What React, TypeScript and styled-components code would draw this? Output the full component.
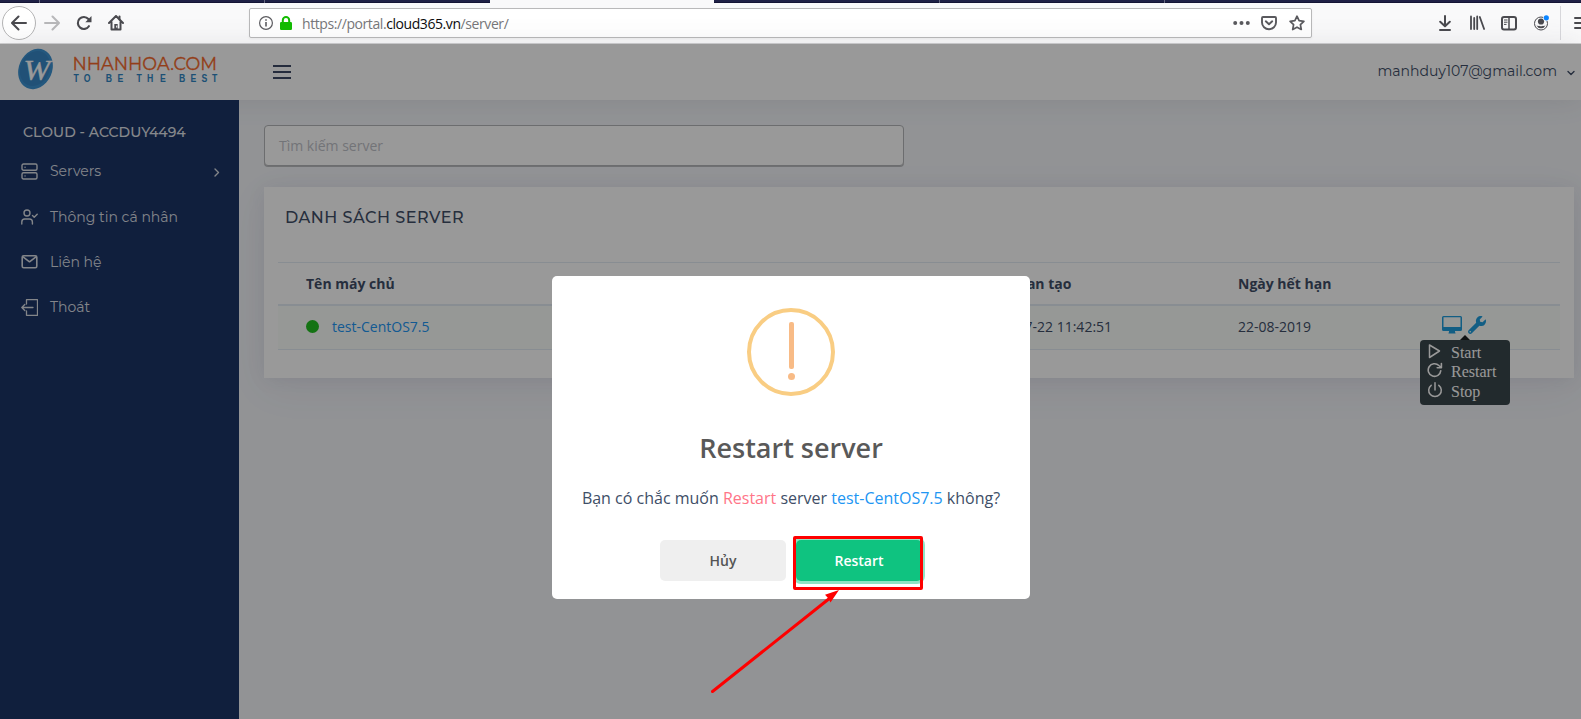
import React from "react";
import styled, { createGlobalStyle } from "styled-components";
import { FaWrench } from "react-icons/fa";

const sans = `"Open Sans", "Noto Sans", sans-serif`;
const display = `Montserrat, Inter, "Open Sans", sans-serif`;

const GlobalStyle = createGlobalStyle`
  *, *::before, *::after { box-sizing: border-box; }
  html, body { margin: 0; padding: 0; overflow: hidden; }
  body { font-family: ${sans}; font-size: 14px; }
  svg { display: block; flex: none; }
`;

const Screen = styled.div`
  width: 1581px;
  height: 719px;
  display: flex;
  flex-direction: column;
  position: relative;
  overflow: hidden;
`;

/* ---------- browser chrome ---------- */

const TabStrip = styled.div`
  display: flex;
  height: 3px;
  flex: none;
  background: #1e2042;
`;

const Tab = styled.div<{ $w: number; $active?: boolean; $line?: boolean }>`
  width: ${(p) => p.$w}px;
  background: ${(p) => (p.$active ? "#f9f9fa" : "linear-gradient(#1f2146 60%, #0c0c28)")};
  border-right: ${(p) => (p.$line ? "1px solid #66677f" : "none")};
`;

const Toolbar = styled.div`
  display: flex;
  align-items: center;
  flex: none;
  height: 41px;
  padding-left: 2px;
  background: #f9f9fa;
  border-bottom: 1px solid #cfcfd0;
  overflow: hidden;
`;

const BackButton = styled.div`
  display: flex;
  align-items: center;
  justify-content: center;
  flex: none;
  width: 34px;
  height: 34px;
  border: 1px solid #b4b4b5;
  border-radius: 50%;
  background: #fff;
`;

const ToolIcon = styled.div<{ $gap: number }>`
  flex: none;
  margin-left: ${(p) => p.$gap}px;
`;

const UrlBar = styled.div`
  display: flex;
  align-items: center;
  flex: none;
  width: 1063px;
  height: 30px;
  margin-left: 125px;
  padding: 0 6px 0 0;
  background: #fff;
  border: 1px solid #b9b9ba;
  border-radius: 2px;
  box-shadow: 0 1px 3px rgba(0, 0, 0, 0.05);
`;

const Url = styled.div`
  flex: 1;
  margin-left: 10px;
  padding-top: 2px;
  font: 14px/20px ${sans};
  letter-spacing: -0.42px;
  color: #77777a;
  b { font-weight: 400; color: #0c0c0d; }
`;

const Divider = styled.div`
  flex: none;
  width: 1px;
  height: 34px;
  margin-left: 11px;
  background: #d7d7db;
`;

/* ---------- page ---------- */

const Page = styled.div`
  flex: 1;
  display: flex;
  flex-direction: column;
  position: relative;
  background: #f3f5f9;
`;

const Header = styled.header`
  display: flex;
  align-items: center;
  height: 56px;
  flex: none;
  background: #fff;
  box-shadow: 0 0 28px rgba(82, 85, 92, 0.12);
  z-index: 1;
`;

const Burger = styled.div`
  display: flex;
  flex-direction: column;
  gap: 4px;
  width: 18px;
  margin-left: 45px;
  padding-bottom: 1px;
  span { height: 2px; background: #3e4a66; }
`;

const User = styled.div`
  display: flex;
  align-items: center;
  gap: 10px;
  margin-left: auto;
  padding: 0 6px 2px 0;
  font: 14px/20px ${display};
  color: #404e67;
  svg { margin-top: 4px; }
`;

const Body = styled.div`
  flex: 1;
  display: flex;
`;

const Sidebar = styled.nav`
  flex: none;
  width: 239px;
  padding: 21px 21px 0;
  background: #1c3566;
  color: #fff;
  font-family: ${display};
  z-index: 2;
`;

const Account = styled.div`
  padding-left: 2px;
  font-size: 14px;
  font-weight: 500;
  line-height: 22px;
  letter-spacing: 0.05px;
  margin-bottom: 6px;
  color: #e0e3e9;
`;

const NavItem = styled.div`
  display: flex;
  align-items: center;
  height: 45.2px;
  gap: 12px;
  color: #dadee5;
  font-size: 14px;
  span { margin-top: -0.5px; }
  svg:last-child:not(:first-child) { margin: 1px -2px 0 auto; }
`;

const Content = styled.main`
  flex: 1;
  padding: 25px 7px 0 25px;
`;

const Search = styled.div`
  width: 640px;
  height: 41px;
  padding: 0 14px;
  font-size: 14px;
  line-height: 40px;
  color: #bfc2c9;
  background: #fff;
  border: 1px solid #b5b6b9;
  border-radius: 4px;
  box-shadow: 0 1px 0 #bbbcbf;
`;

const Card = styled.section`
  height: 191px;
  margin-top: 21px;
  padding: 17px 14px 0;
  background: #fff;
  box-shadow: 0 10px 40px rgba(62, 57, 107, 0.06), 0 2px 18px rgba(62, 57, 107, 0.07);
`;

const CardTitle = styled.h4`
  margin: 0 0 31px;
  padding: 0 7px;
  height: 27px;
  font: 500 16px/27px ${display};
  letter-spacing: 0.5px;
  color: #404e67;
`;

const Row = styled.div<{ $head?: boolean }>`
  display: grid;
  grid-template-columns: 674px 258px 204px 1fr;
  align-items: center;
  height: 44px;
  padding-left: 28px;
  padding-bottom: ${(p) => (p.$head ? 0 : 2)}px;
  line-height: 21px;
  color: #404e67;
  font-weight: ${(p) => (p.$head ? 700 : 400)};
  background: ${(p) => (p.$head ? "none" : "#fafdfb")};
  border-top: ${(p) => (p.$head ? "1px solid #e3ebf3" : "none")};
  border-bottom: ${(p) => (p.$head ? "2px" : "1px")} solid #e3ebf3;
`;

const ServerName = styled.div`
  display: flex;
  align-items: center;
  gap: 13px;
  color: #2196f3;
`;

const Status = styled.span`
  width: 13px;
  height: 13px;
  border-radius: 50%;
  background: #22c021;
`;

const Actions = styled.div`
  display: flex;
  position: relative;
  gap: 6px;
  color: #1f9ddd;
  margin-top: -3px;
`;

const Tooltip = styled.div`
  position: absolute;
  top: 24px;
  left: -22px;
  width: 90px;
  height: 65px;
  padding: 3px 0 0 7px;
  border-radius: 4px;
  background: #3a464b;
  color: #fff;
  font: 16px/19.4px "Liberation Serif", serif;
  &::before {
    content: "";
    position: absolute;
    top: -5px;
    left: 40px;
    border: 5px solid transparent;
    border-top: 0;
    border-bottom-color: #1a1e20;
  }
`;

const TooltipItem = styled.div`
  display: flex;
  gap: 8px;
`;

/* ---------- dialog ---------- */

const Overlay = styled.div`
  position: absolute;
  inset: 0;
  z-index: 10;
  background: rgba(0, 0, 0, 0.4);
`;

const Modal = styled.div`
  position: absolute;
  left: 552px;
  top: 232px;
  width: 478px;
  height: 323px;
  display: flex;
  flex-direction: column;
  align-items: center;
  padding-top: 32px;
  background: #fff;
  border-radius: 5px;
`;

const Warning = styled.div`
  display: flex;
  flex-direction: column;
  align-items: center;
  flex: none;
  width: 88px;
  height: 88px;
  padding-top: 10px;
  border: 4px solid #f9cd83;
  border-radius: 50%;
  i { width: 5px; height: 47px; border-radius: 2px; background: #f8bb86; }
  u { width: 7px; height: 7px; margin-top: 4px; border-radius: 50%; background: #f8bb86; }
`;

const ModalTitle = styled.h2`
  margin: 32px 0 0;
  font: 600 27px/40px ${sans};
  color: #595959;
`;

const ModalText = styled.p`
  margin: 18px 0 0;
  font-size: 16px;
  line-height: 24px;
  color: #404e67;
  white-space: nowrap;
`;

const Tint = styled.span<{ $c: string }>`
  color: ${(p) => p.$c};
`;

const Buttons = styled.div`
  display: flex;
  gap: 10px;
  margin-top: 30px;
`;

const Button = styled.button<{ $primary?: boolean }>`
  width: 126px;
  height: 41px;
  padding: 0;
  border: 0;
  border-radius: 5px;
  font: 600 14px/20px ${sans};
  color: ${(p) => (p.$primary ? "#fff" : "#555")};
  background: ${(p) => (p.$primary ? "#0fc380" : "#efefef")};
  box-shadow: ${(p) => (p.$primary ? "0 0 0 3px #8fe5c6" : "none")};
`;

const Highlight = styled.div`
  position: absolute;
  left: 793px;
  top: 492px;
  width: 130px;
  height: 54px;
  border: 3px solid #fe0000;
  border-radius: 2px;
`;

const Arrow = styled.svg`
  position: absolute;
  left: 706px;
  top: 542px;
`;

/* ---------- drawings ---------- */

const ink = "#4a4a4f";

const ArrowIcon = ({ flip, color }: { flip?: boolean; color: string }) => (
  <svg width="16" height="16" viewBox="0 0 16 16" fill="none" stroke={color} strokeWidth="2" strokeLinecap="round" strokeLinejoin="round">
    {flip ? <path d="M1 8h14M8.500 1.500 15 8l-6.500 6.500" /> : <path d="M15 8H1.200M7.500 1.500 1 8l6.500 6.500" />}
  </svg>
);

const ReloadIcon = () => (
  <svg width="16" height="16" viewBox="0 0 16 16" fill="none" stroke={ink} strokeWidth="2.100">
    <path d="M12.900 11.200A6 6 0 1 1 12.400 4" strokeLinecap="round" />
    <path d="M15.500 1v6.200h-6.200z" fill={ink} stroke="none" />
  </svg>
);

const HomeIcon = () => (
  <svg width="16" height="16" viewBox="0 0 16 16" fill="none" stroke={ink} strokeWidth="2" strokeLinejoin="round" strokeLinecap="round">
    <path d="M1 8 8 1l7 7M3.500 7v7.500h9V7" />
    <path d="M11.500 1.500v3" />
    <path d="M6.300 14V9h3.400v5z" fill={ink} stroke="none" />
    <path d="M8.700 11v1.200" stroke="#fff" strokeWidth="1" />
  </svg>
);

const tagline: [string, number][] = [
  ["T", 73.5], ["O", 83.7], ["B", 105.7], ["E", 117.5], ["T", 136.5], ["H", 147], ["E", 160],
  ["B", 179], ["E", 190.5], ["S", 201.5], ["T", 212],
];

const Brand = () => (
  <svg width="228" height="56" viewBox="0 44 228 56">
    <ellipse cx="35.500" cy="69" rx="16.600" ry="20.800" transform="rotate(24 35.500 69)" fill="#3d93d3" />
    <ellipse cx="35" cy="68.500" rx="14.500" ry="18" transform="rotate(24 35 68.500)" fill="#3787c6" />
    <text x="23.500" y="80" fontFamily="'Liberation Serif', serif" fontStyle="italic" fontSize="29" textLength="26.500" lengthAdjust="spacingAndGlyphs" fill="#fff" stroke="#fff" strokeWidth="0.400">W</text>
    <text x="72.500" y="69.700" fontFamily="Montserrat, Inter, sans-serif" fontWeight="400" fontSize="18.200" textLength="144.500" lengthAdjust="spacingAndGlyphs" fill="#f5682a" stroke="#f5682a" strokeWidth="0.300">NHANHOA.COM</text>
    <text
      transform="scale(0.85 1)"
      x={tagline.map(([, x]) => x / 0.85).join(" ")}
      y="82.500"
      fontFamily="'Liberation Sans', sans-serif"
      fontWeight="700"
      fontSize="10.200"
      fill="#2f86c4"
    >
      {tagline.map(([c]) => c).join("")}
    </text>
  </svg>
);

const line = { fill: "none", stroke: "currentColor", strokeWidth: 1.4, strokeLinecap: "round" as const, strokeLinejoin: "round" as const };

export default function App() {
  return (
    <Screen>
      <GlobalStyle />
      <TabStrip>
        <Tab $w={40} $line />
        <Tab $w={225} $line />
        <Tab $w={225} />
        <Tab $w={224} $active />
        <Tab $w={226} $line />
        <Tab $w={225} $line />
        <Tab $w={416} />
      </TabStrip>

      <Toolbar>
        <BackButton><ArrowIcon color={ink} /></BackButton>
        <ToolIcon $gap={8}><ArrowIcon flip color="#b8b8ba" /></ToolIcon>
        <ToolIcon $gap={16}><ReloadIcon /></ToolIcon>
        <ToolIcon $gap={16}><HomeIcon /></ToolIcon>
        <UrlBar>
          <ToolIcon $gap={9}>
            <svg width="14" height="14" viewBox="0 0 14 14" fill="none" stroke="#5c5c60">
              <circle cx="7" cy="7" r="6.400" strokeWidth="1.200" />
              <path d="M7 6v4.500M7 3.200v1.600" strokeWidth="1.600" />
            </svg>
          </ToolIcon>
          <ToolIcon $gap={7}>
            <svg width="12" height="14" viewBox="0 0 12 14">
              <rect y="6" width="12" height="8" rx="1.200" fill="#12bc00" />
              <path d="M2.800 7V4.200a3.200 3.200 0 0 1 6.400 0V7" fill="none" stroke="#12bc00" strokeWidth="2" />
            </svg>
          </ToolIcon>
          <Url>https://portal.<b>cloud365.vn</b>/server/</Url>
          <svg width="17" height="16" viewBox="0 0 17 16" fill="#5a5a5e">
            <circle cx="2.200" cy="8" r="2" /><circle cx="8.500" cy="8" r="2" /><circle cx="14.800" cy="8" r="2" />
          </svg>
          <ToolIcon $gap={11}>
            <svg width="16" height="16" viewBox="0 0 16 16" fill="none" stroke="#5a5a5e" strokeWidth="1.900" strokeLinecap="round" strokeLinejoin="round">
              <path d="M2 2h12q1 0 1 1v4.500a7 6.700 0 0 1-14 0V3q0-1 1-1z" />
              <path d="m4.800 6.300 3.200 3 3.200-3" />
            </svg>
          </ToolIcon>
          <ToolIcon $gap={12}>
            <svg width="16" height="16" viewBox="0 0 16 16" fill="none" stroke="#5a5a5e" strokeWidth="1.700" strokeLinejoin="round">
              <path d="m8 1.200 2.100 4.400 4.800.7-3.500 3.300.9 4.900L8 12.200l-4.300 2.300.9-4.900L1.100 6.300l4.800-.7z" />
            </svg>
          </ToolIcon>
        </UrlBar>
        <ToolIcon $gap={127}>
          <svg width="12" height="16" viewBox="0 0 12 16" fill="none" stroke={ink} strokeWidth="2" strokeLinecap="round" strokeLinejoin="round">
            <path d="M6 1v10M1.200 6.700 6 11.200l4.800-4.500M1 15h10" />
          </svg>
        </ToolIcon>
        <ToolIcon $gap={19}>
          <svg width="15" height="16" viewBox="0 0 15 16" fill="none" stroke={ink} strokeWidth="1.800" strokeLinecap="round">
            <path d="M1 1.500v12.500M4.200 3v11M7.200 1.500v12.500M9.800 2l4.300 12" />
          </svg>
        </ToolIcon>
        <ToolIcon $gap={16}>
          <svg width="16" height="16" viewBox="0 0 16 16" fill="none" stroke={ink}>
            <rect x="1" y="2" width="14" height="12.500" rx="2" strokeWidth="2" />
            <path d="M8 2v12" strokeWidth="1.500" />
            <path d="M3 5h3.500M3 7.200h3.500M3 9.400h2.500" strokeWidth="1" />
          </svg>
        </ToolIcon>
        <ToolIcon $gap={16}>
          <svg width="16" height="16" viewBox="0 0 16 16">
            <circle cx="8" cy="8.500" r="6.500" fill="none" stroke={ink} strokeWidth="1" />
            <circle cx="8" cy="6.500" r="3.100" fill={ink} />
            <path d="M3.500 10.500q1.500.8 2.500.3 2 1 4 0 1 .5 2.500-.3A5 5 0 0 1 3.500 10.500z" fill={ink} />
            <circle cx="13.300" cy="2.800" r="3.200" fill="#f9f9fa" />
            <circle cx="13.300" cy="2.800" r="2.600" fill="#0a84ff" />
          </svg>
        </ToolIcon>
        <Divider />
        <ToolIcon $gap={13}>
          <svg width="16" height="16" viewBox="0 0 16 16" stroke={ink} strokeWidth="2" strokeLinecap="round">
            <path d="M1 3h14M1 8h14M1 13h14" />
          </svg>
        </ToolIcon>
      </Toolbar>

      <Page>
        <Header>
          <Brand />
          <Burger><span /><span /><span /></Burger>
          <User>
            manhduy107@gmail.com
            <svg width="8" height="6" viewBox="0 0 8 6" {...line}><path d="m1 1.500 3 3 3-3" /></svg>
          </User>
        </Header>
        <Body>
          <Sidebar>
            <Account>CLOUD - ACCDUY4494</Account>
            <NavItem>
              <svg width="17" height="17" viewBox="0 0 17 17" {...line}>
                <rect x="1" y="1" width="15" height="6.300" rx="1.500" /><rect x="1" y="9.700" width="15" height="6.300" rx="1.500" />
                <path d="M4 4.200h.1M4 12.900h.1" />
              </svg>
              <span>Servers</span>
              <svg width="6" height="9" viewBox="0 0 6 9" {...line}><path d="m1 1 3.500 3.500L1 8" /></svg>
            </NavItem>
            <NavItem>
              <svg width="17" height="17" viewBox="0 0 17 17" {...line}>
                <circle cx="6" cy="5" r="3" /><path d="M.8 16v-2a3 3 0 0 1 3-3h4.600a3 3 0 0 1 3 3v2" /><path d="m11.500 7.500 1.700 1.700 3-3" />
              </svg>
              <span>Thông tin cá nhân</span>
            </NavItem>
            <NavItem>
              <svg width="17" height="17" viewBox="0 0 17 17" {...line} strokeWidth="1.600">
                <rect x="1.200" y="2.800" width="14.600" height="12" rx="1.500" /><path d="m2 3.800 6.500 5L15 3.800" />
              </svg>
              <span>Liên hệ</span>
            </NavItem>
            <NavItem>
              <svg width="17" height="17" viewBox="0 0 17 17" {...line} strokeWidth="1.300">
                <path d="M5.500 5V.7h11v15.600h-11V12M12 8.500H.8M3.800 5.500l-3 3 3 3" />
              </svg>
              <span>Thoát</span>
            </NavItem>
          </Sidebar>

          <Content>
            <Search>Tìm kiếm server</Search>
            <Card>
              <CardTitle>DANH SÁCH SERVER</CardTitle>
              <Row $head>
                <span>Tên máy chủ</span>
                <span>Thời gian tạo</span>
                <span>Ngày hết hạn</span>
              </Row>
              <Row>
                <ServerName><Status />test-CentOS7.5</ServerName>
                <span>2019-07-22 11:42:51</span>
                <span>22-08-2019</span>
                <Actions>
                  <svg width="20" height="18" viewBox="0 0 20 18" fill="currentColor">
                    <path fillRule="evenodd" d="M1.500 0h17A1.500 1.500 0 0 1 20 1.500v12a1.500 1.500 0 0 1-1.500 1.500H13v1l.5 1v.5h-7V17l.5-1v-1H1.500A1.500 1.500 0 0 1 0 13.500v-12A1.500 1.500 0 0 1 1.500 0zm0 1.300v9.700h17V1.300z" />
                  </svg>
                  <FaWrench size={18} />
                  <Tooltip>
                    <TooltipItem>
                      <svg width="16" height="16" viewBox="0 0 16 16" {...line} strokeWidth="1.500"><path d="M2.500 2v12.500L12.500 8z" /></svg>Start
                    </TooltipItem>
                    <TooltipItem>
                      <svg width="16" height="16" viewBox="0 0 16 16" {...line} strokeWidth="1.600"><path d="M13.800 8.700A6.300 6.300 0 1 1 11.900 3.500l2 1.800M14.400 1.500v4.200h-4.200" /></svg>Restart
                    </TooltipItem>
                    <TooltipItem>
                      <svg width="16" height="16" viewBox="0 0 16 16" {...line} strokeWidth="1.500"><path d="M4.200 3.300a6.300 6.300 0 1 0 7.600 0M8 .8V8" /></svg>Stop
                    </TooltipItem>
                  </Tooltip>
                </Actions>
              </Row>
            </Card>
          </Content>
        </Body>

        <Overlay>
          <Modal>
            <Warning><i /><u /></Warning>
            <ModalTitle>Restart server</ModalTitle>
            <ModalText>
              Bạn có chắc muốn <Tint $c="#ff7588">Restart</Tint> server <Tint $c="#2196f3">test-CentOS7.5</Tint> không?
            </ModalText>
            <Buttons>
              <Button>Hủy</Button>
              <Button $primary>Restart</Button>
            </Buttons>
          </Modal>
          <Highlight />
          <Arrow width="140" height="112" viewBox="706 586 140 112">
            <path d="M712.500 691.500 830 598" stroke="#fe0000" strokeWidth="3" strokeLinecap="round" />
            <path d="M839 590 825 594.800 828 598 830.500 602.500z" fill="#fe0000" />
          </Arrow>
        </Overlay>
      </Page>
    </Screen>
  );
}
